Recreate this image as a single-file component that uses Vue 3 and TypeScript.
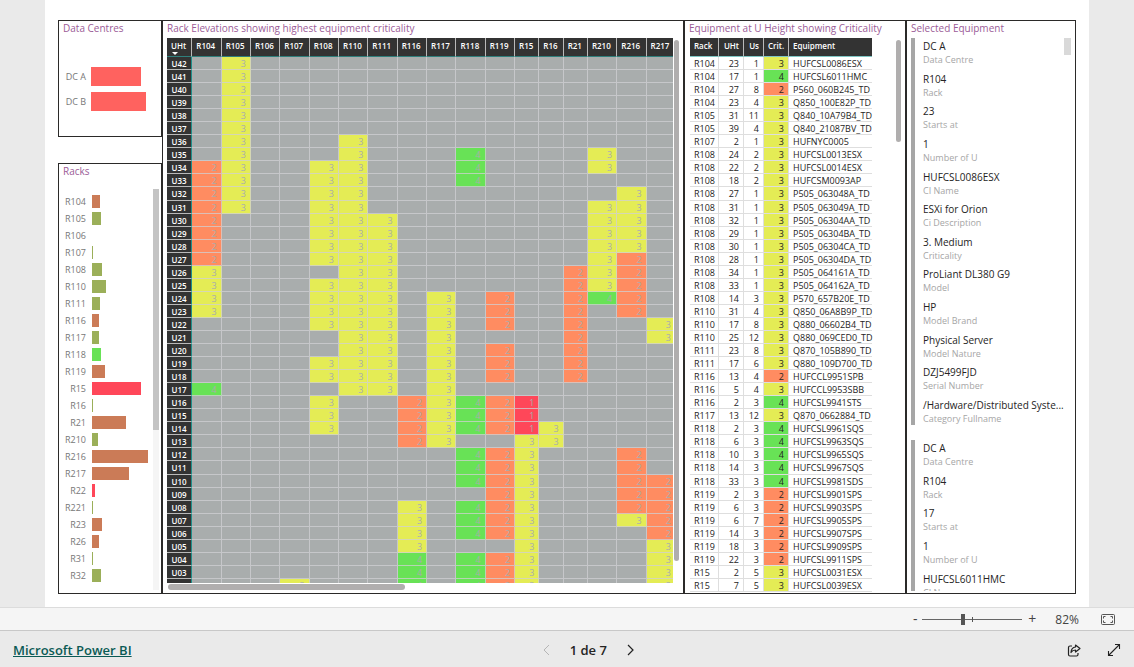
<script setup lang="ts">
import { ref } from 'vue'

interface Bar {
  name: string
  size: number
  tone: string
}

interface Run {
  from: number
  to: number
  crit: number
}

interface Rack {
  name: string
  runs: Run[]
}

const zoom = ref(40)

const centres: Bar[] = [
  { name: 'DC A', size: 49, tone: 'coral' },
  { name: 'DC B', size: 54, tone: 'coral' },
]

const rackBars: Bar[] = [
  { name: 'R104', size: 8, tone: 'clay' },
  { name: 'R105', size: 9, tone: 'olive' },
  { name: 'R106', size: 0, tone: 'olive' },
  { name: 'R107', size: 1, tone: 'olive' },
  { name: 'R108', size: 10, tone: 'olive' },
  { name: 'R110', size: 14, tone: 'olive' },
  { name: 'R111', size: 8, tone: 'olive' },
  { name: 'R116', size: 7, tone: 'clay' },
  { name: 'R117', size: 7, tone: 'olive' },
  { name: 'R118', size: 9, tone: 'green' },
  { name: 'R119', size: 13, tone: 'clay' },
  { name: 'R15', size: 49, tone: 'red' },
  { name: 'R16', size: 1, tone: 'olive' },
  { name: 'R21', size: 34, tone: 'clay' },
  { name: 'R210', size: 6, tone: 'olive' },
  { name: 'R216', size: 56, tone: 'clay' },
  { name: 'R217', size: 37, tone: 'clay' },
  { name: 'R22', size: 3, tone: 'red' },
  { name: 'R221', size: 1, tone: 'olive' },
  { name: 'R23', size: 10, tone: 'clay' },
  { name: 'R26', size: 7, tone: 'clay' },
  { name: 'R31', size: 1, tone: 'olive' },
  { name: 'R32', size: 9, tone: 'olive' },
]

const run = (from: number, to: number, crit: number): Run => ({ from, to, crit })

const racks: Rack[] = [
  { name: 'R104', runs: [run(34, 27, 2), run(26, 23, 3), run(17, 17, 4)] },
  { name: 'R105', runs: [run(42, 31, 3)] },
  { name: 'R106', runs: [] },
  { name: 'R107', runs: [run(2, 2, 3)] },
  { name: 'R108', runs: [run(34, 27, 3), run(25, 22, 3), run(19, 18, 3), run(16, 14, 3)] },
  { name: 'R110', runs: [run(36, 17, 3)] },
  { name: 'R111', runs: [run(30, 17, 3)] },
  { name: 'R116', runs: [run(16, 13, 2), run(8, 5, 3), run(4, 2, 4)] },
  { name: 'R117', runs: [run(24, 13, 3)] },
  { name: 'R118', runs: [run(35, 33, 4), run(16, 14, 4), run(12, 10, 4), run(8, 6, 4), run(4, 2, 4)] },
  { name: 'R119', runs: [run(24, 22, 2), run(20, 18, 2), run(16, 14, 2), run(12, 6, 2), run(4, 2, 2)] },
  { name: 'R15', runs: [run(16, 14, 1), run(13, 2, 3)] },
  { name: 'R16', runs: [run(14, 13, 3)] },
  { name: 'R21', runs: [run(26, 18, 2)] },
  { name: 'R210', runs: [run(35, 34, 3), run(31, 25, 3), run(24, 24, 4)] },
  { name: 'R216', runs: [run(32, 28, 3), run(27, 23, 2), run(12, 8, 2), run(7, 7, 3)] },
  { name: 'R217', runs: [run(22, 21, 3), run(10, 6, 2), run(5, 2, 3)] },
]

const units: number[] = Array.from({ length: 42 }, (_, i) => 42 - i)
const unitLabel = (u: number): string => 'U' + String(u).padStart(2, '0')
const critAt = (rack: Rack, u: number): number | undefined =>
  rack.runs.find((r) => u <= r.from && u >= r.to)?.crit

const equipment: [string, number, number, number, string][] = [
  ['R104', 23, 1, 3, 'HUFCSL0086ESX'],
  ['R104', 17, 1, 4, 'HUFCSL6011HMC'],
  ['R104', 27, 8, 2, 'P560_060B245_TD'],
  ['R104', 23, 4, 3, 'Q850_100E82P_TD'],
  ['R105', 31, 11, 3, 'Q840_10A79B4_TD'],
  ['R105', 39, 4, 3, 'Q840_21087BV_TD'],
  ['R107', 2, 1, 3, 'HUFNYC0005'],
  ['R108', 24, 2, 3, 'HUFCSL0013ESX'],
  ['R108', 22, 2, 3, 'HUFCSL0014ESX'],
  ['R108', 18, 2, 3, 'HUFCSM0093AP'],
  ['R108', 27, 1, 3, 'P505_063048A_TD'],
  ['R108', 31, 1, 3, 'P505_063049A_TD'],
  ['R108', 32, 1, 3, 'P505_06304AA_TD'],
  ['R108', 29, 1, 3, 'P505_06304BA_TD'],
  ['R108', 30, 1, 3, 'P505_06304CA_TD'],
  ['R108', 28, 1, 3, 'P505_06304DA_TD'],
  ['R108', 34, 1, 3, 'P505_064161A_TD'],
  ['R108', 33, 1, 3, 'P505_064162A_TD'],
  ['R108', 14, 3, 3, 'P570_657B20E_TD'],
  ['R110', 31, 4, 3, 'Q850_06A8B9P_TD'],
  ['R110', 17, 8, 3, 'Q880_06602B4_TD'],
  ['R110', 25, 12, 3, 'Q880_069CED0_TD'],
  ['R111', 23, 8, 3, 'Q870_105B890_TD'],
  ['R111', 17, 6, 3, 'Q880_109D700_TD'],
  ['R116', 13, 4, 2, 'HUFCCL9951SPB'],
  ['R116', 5, 4, 3, 'HUFCCL9953SBB'],
  ['R116', 2, 3, 4, 'HUFCSL9941STS'],
  ['R117', 13, 12, 3, 'Q870_0662884_TD'],
  ['R118', 2, 3, 4, 'HUFCSL9961SQS'],
  ['R118', 6, 3, 4, 'HUFCSL9963SQS'],
  ['R118', 10, 3, 4, 'HUFCSL9965SQS'],
  ['R118', 14, 3, 4, 'HUFCSL9967SQS'],
  ['R118', 33, 3, 4, 'HUFCSL9981SDS'],
  ['R119', 2, 3, 2, 'HUFCSL9901SPS'],
  ['R119', 6, 3, 2, 'HUFCSL9903SPS'],
  ['R119', 6, 7, 2, 'HUFCSL9905SPS'],
  ['R119', 14, 3, 2, 'HUFCSL9907SPS'],
  ['R119', 18, 3, 2, 'HUFCSL9909SPS'],
  ['R119', 22, 3, 2, 'HUFCSL9911SPS'],
  ['R15', 2, 5, 3, 'HUFCSL0031ESX'],
  ['R15', 7, 5, 3, 'HUFCSL0039ESX'],
]

const cards: [string, string][][] = [
  [
    ['DC A', 'Data Centre'],
    ['R104', 'Rack'],
    ['23', 'Starts at'],
    ['1', 'Number of U'],
    ['HUFCSL0086ESX', 'CI Name'],
    ['ESXi for Orion', 'Ci Description'],
    ['3. Medium', 'Criticality'],
    ['ProLiant DL380 G9', 'Model'],
    ['HP', 'Model Brand'],
    ['Physical Server', 'Model Nature'],
    ['DZJ5499FJD', 'Serial Number'],
    ['/Hardware/Distributed Syste...', 'Category Fullname'],
  ],
  [
    ['DC A', 'Data Centre'],
    ['R104', 'Rack'],
    ['17', 'Starts at'],
    ['1', 'Number of U'],
    ['HUFCSL6011HMC', 'CI Name'],
  ],
]
</script>

<template>
  <div class="viewer">
    <main class="stage">
      <div class="report">
        <div class="side">
          <section class="panel">
            <h2>Data Centres</h2>
            <ul class="bars centres">
              <li v-for="c in centres" :key="c.name">
                <span class="bar-label">{{ c.name }}</span>
                <span class="track"><span class="bar" :class="c.tone" :style="{ width: (c.size / 56) * 100 + '%' }"></span></span>
              </li>
            </ul>
          </section>
          <section class="panel racks">
            <h2>Racks</h2>
            <div class="rack-body">
              <ul class="bars">
                <li v-for="r in rackBars" :key="r.name">
                  <span class="bar-label">{{ r.name }}</span>
                  <span class="track"><span class="bar" :class="r.tone" :style="{ width: (r.size / 56) * 100 + '%' }"></span></span>
                </li>
              </ul>
              <div class="rack-scroll"><div class="rack-thumb"></div></div>
            </div>
          </section>
        </div>

        <section class="panel elevations">
          <h2>Rack Elevations showing highest equipment criticality</h2>
          <div class="scroll-row">
            <div class="viewport">
              <table class="matrix">
                <colgroup>
                  <col class="col-unit" />
                  <col v-for="r in racks" :key="r.name" :class="r.name.length > 3 ? 'col-wide' : 'col-narrow'" />
                </colgroup>
                <thead>
                  <tr>
                    <th scope="col" class="sorted">
                      UHt
                      <svg class="sort-mark" viewBox="0 0 6 3" width="6" height="3"><path d="M0 0h6L3 3z" fill="#fff" /></svg>
                    </th>
                    <th v-for="r in racks" :key="r.name" scope="col">{{ r.name }}</th>
                  </tr>
                </thead>
                <tbody>
                  <tr v-for="u in units" :key="u">
                    <th scope="row">{{ unitLabel(u) }}</th>
                    <td v-for="r in racks" :key="r.name" :class="'crit-' + (critAt(r, u) ?? 'none')">{{ critAt(r, u) }}</td>
                  </tr>
                </tbody>
              </table>
            </div>
            <div class="vbar"><div class="thumb matrix-thumb"></div></div>
          </div>
          <div class="hbar"><div class="thumb hthumb"></div></div>
        </section>

        <section class="panel equipment">
          <h2>Equipment at U Height showing Criticality</h2>
          <div class="scroll-row">
            <div class="viewport">
              <table class="listing">
                <colgroup>
                  <col class="col-rack" />
                  <col class="col-uht" />
                  <col class="col-us" />
                  <col class="col-crit" />
                  <col />
                </colgroup>
                <thead>
                  <tr>
                    <th scope="col">Rack</th>
                    <th scope="col" class="num">UHt</th>
                    <th scope="col" class="num">Us</th>
                    <th scope="col" class="num">Crit.</th>
                    <th scope="col">Equipment</th>
                  </tr>
                </thead>
                <tbody>
                  <tr v-for="(e, i) in equipment" :key="i">
                    <td>{{ e[0] }}</td>
                    <td class="num">{{ e[1] }}</td>
                    <td class="num">{{ e[2] }}</td>
                    <td class="num" :class="'crit-' + e[3]">{{ e[3] }}</td>
                    <td>{{ e[4] }}</td>
                  </tr>
                </tbody>
              </table>
            </div>
            <div class="vbar"><div class="thumb listing-thumb"></div></div>
          </div>
        </section>

        <section class="panel selected">
          <h2>Selected Equipment</h2>
          <div class="scroll-row">
            <div class="cards">
              <dl v-for="(card, i) in cards" :key="i" class="card">
                <div v-for="field in card" :key="field[1]" class="field">
                  <dt>{{ field[1] }}</dt>
                  <dd>{{ field[0] }}</dd>
                </div>
              </dl>
            </div>
            <div class="card-scroll"></div>
          </div>
        </section>
      </div>
    </main>

    <div class="zoombar">
      <button type="button" class="step" aria-label="Zoom out">-</button>
      <input v-model.number="zoom" class="slider" type="range" min="0" max="100" aria-label="Zoom" />
      <button type="button" class="step" aria-label="Zoom in">+</button>
      <span class="percent">82%</span>
      <button type="button" class="icon-btn" aria-label="Fit to page">
        <svg width="14" height="11" viewBox="0 0 14 11" fill="none" stroke="#555">
          <rect x="0.5" y="0.5" width="13" height="10" rx="1" />
          <path d="M4.5 2.5h-2v2M2.5 6.5v2h2M9.5 2.5h2v2M11.5 6.5v2h-2" />
        </svg>
      </button>
    </div>

    <footer class="footer">
      <a href="#" class="brand">Microsoft Power BI</a>
      <nav class="pager" aria-label="Pages">
        <button type="button" class="icon-btn" aria-label="Previous page" disabled>
          <svg width="10" height="12" viewBox="0 0 10 12" fill="none" stroke="#b5b5b5"><path d="M7 1L2 6l5 5" /></svg>
        </button>
        <span class="page">1 de 7</span>
        <button type="button" class="icon-btn" aria-label="Next page">
          <svg width="10" height="12" viewBox="0 0 10 12" fill="none" stroke="#222" stroke-width="1.2"><path d="M3 1l5 5-5 5" /></svg>
        </button>
      </nav>
      <div class="actions">
        <button type="button" class="icon-btn" aria-label="Share">
          <svg width="14" height="13" viewBox="0 0 14 13" fill="none" stroke="#222" stroke-width="1.2" stroke-linejoin="round">
            <path d="M5 2H3Q1.500 2 1.500 3.500V10.500Q1.500 12 3 12H9.500Q11 12 11 10.500V9" />
            <path d="M8.500 1L13 4.500L8.500 8V6Q5.500 6 4 8.500Q4.300 3.500 8.500 3Z" />
          </svg>
        </button>
        <button type="button" class="icon-btn" aria-label="Full screen">
          <svg width="14" height="14" viewBox="0 0 14 14" fill="none" stroke="#222" stroke-width="1.1">
            <path d="M1.500 12.500L12.500 1.500M8 1.500h4.500V6M1.500 8v4.500H6" />
          </svg>
        </button>
      </div>
    </footer>
  </div>
</template>

<style>
body {
  margin: 0;
}
</style>

<style scoped>
.viewer {
  display: flex;
  flex-direction: column;
  height: 100vh;
  overflow: hidden;
  background: #eaeaea;
  color: #252423;
  font-family: 'Open Sans', 'Noto Sans', sans-serif;
  font-size: 9px;
}

.viewer * {
  box-sizing: border-box;
}

button {
  padding: 0;
  border: 0;
  background: none;
  color: inherit;
  font: inherit;
}

.stage {
  display: flex;
  flex: 1;
  min-height: 0;
  padding: 0 45px;
}

.report {
  display: grid;
  flex: 1;
  grid-template-columns: 104fr 522fr 222fr 170fr;
  grid-template-rows: minmax(0, 1fr);
  padding: 20px 13px 13px;
  background: #fff;
}

.side {
  display: grid;
  grid-template-rows: 117px minmax(0, 1fr);
  gap: 26px;
  min-width: 0;
}

.panel {
  display: flex;
  flex-direction: column;
  min-width: 0;
  min-height: 0;
  border: 1px solid #2b2a29;
  overflow: hidden;
}

h2 {
  flex: none;
  margin: 0;
  padding: 0 0 2px 4px;
  color: #9b5c97;
  font-size: 10px;
  font-weight: 400;
  line-height: 15px;
  white-space: nowrap;
}

.bars {
  flex: 1;
  min-width: 0;
  margin: 0;
  padding: 0;
  list-style: none;
}

.bars li {
  display: flex;
  align-items: center;
  gap: 6px;
  height: 17px;
}

.centres {
  padding: 26px 13px 0 0;
}

.bars.centres li {
  gap: 5px;
  height: 25px;
}

.centres .bar {
  height: 19px;
}

.bar-label {
  flex: none;
  width: 27px;
  color: #777;
  text-align: right;
}

.track {
  flex: 1;
}

.bar {
  display: block;
  height: 13px;
}

.coral {
  background: #ff625f;
}

.clay {
  background: #cb7b57;
}

.olive {
  background: #9baf59;
}

.green {
  background: #68e256;
}

.red {
  background: #ff4759;
}

.rack-body {
  display: flex;
  flex: 1;
  gap: 5px;
  min-height: 0;
  padding: 8px 2px 3px 0;
}

.rack-body .bars {
  padding-top: 4px;
}

.rack-scroll {
  width: 6px;
  background: #f5f5f5;
}

.rack-thumb {
  height: 60%;
  background: #c4c4c4;
}

.scroll-row {
  display: flex;
  flex: 1;
  min-height: 0;
}

.viewport {
  flex: 1;
  min-width: 0;
  overflow: hidden;
}

.thumb {
  border-radius: 3px;
  background: #b0aeae;
}

.vbar {
  flex: none;
  width: 5px;
  padding-top: 2px;
}

.elevations {
  padding: 0 4px 3px;
}

.elevations h2,
.equipment h2,
.selected h2 {
  padding-left: 0;
}

.elevations .scroll-row {
  gap: 1px;
}

.matrix-thumb {
  height: 96%;
}

.hbar {
  flex: none;
  height: 7px;
  padding: 1px 6px 0 1px;
}

.hthumb {
  width: 47%;
  height: 6px;
}

table {
  border-spacing: 0;
  table-layout: fixed;
}

th,
td {
  padding: 1px 4px 0;
  overflow: hidden;
  font-size: 9px;
  line-height: 11px;
  white-space: nowrap;
}

th {
  background: #333;
  color: #fff;
  font-size: 8px;
  font-weight: 600;
}

thead th {
  height: 19px;
  padding-top: 2px;
  border-right: 1px solid #b9b9b9;
  border-bottom: 1px solid #2f7f7c;
  line-height: 12px;
  vertical-align: top;
}

.matrix {
  width: 509px;
  height: 567px;
}

.col-unit {
  width: 25px;
}

.col-wide {
  width: 29px;
}

.col-narrow {
  width: 24px;
}

.matrix td {
  border-right: 1px solid rgba(208, 208, 212, 0.75);
  border-bottom: 1px solid rgba(208, 208, 212, 0.75);
  background-color: #a9adad;
  color: #a9adad;
  text-align: right;
}

.matrix tbody th {
  padding: 1px 0 0;
  border-right: 1px solid #1f8f8a;
  border-bottom: 1px solid #b9b9b9;
  text-align: center;
}

.matrix thead th {
  padding-right: 0;
  text-align: left;
}

.sort-mark {
  display: block;
  margin-left: 1px;
}

.matrix .crit-1,
.listing .crit-1 {
  background-color: #ff4759;
}

.matrix .crit-2,
.listing .crit-2 {
  background-color: #ff8c61;
}

.matrix .crit-3,
.listing .crit-3 {
  background-color: #e4ec55;
}

.matrix .crit-4,
.listing .crit-4 {
  background-color: #68e256;
}

.equipment {
  padding: 0 4px 1px;
}

.equipment .viewport {
  padding-left: 1px;
}

.listing {
  width: 182px;
  height: 554px;
}

.listing thead th {
  border-bottom-color: #7fc6c4;
  text-align: left;
}

.listing td {
  border-right: 1px solid #dedede;
  border-bottom: 1px solid #dedede;
}

.listing th:last-child,
.listing td:last-child {
  padding-right: 0;
  border-right: 0;
  overflow: visible;
}

.listing thead .num,
.listing .num {
  text-align: right;
}

.col-rack {
  width: 29px;
}

.col-uht {
  width: 25px;
}

.col-us {
  width: 20px;
}

.col-crit {
  width: 25px;
}

.listing-thumb {
  height: 102px;
}

.selected {
  padding: 0 4px 2px;
}

.cards {
  flex: 1;
  min-width: 0;
  overflow: hidden;
}

.card {
  display: grid;
  grid-template-rows: repeat(12, 28px);
  align-content: space-between;
  height: 387px;
  margin: 0 0 15px;
  padding-left: 8px;
  border-left: 4px solid #a6a6a6;
}

.field {
  display: flex;
  flex-direction: column-reverse;
  justify-content: flex-end;
  white-space: nowrap;
}

dt {
  color: #a6a6a6;
  line-height: 12px;
}

dd {
  margin: 0;
  font-size: 10px;
  line-height: 16px;
}

.card-scroll {
  width: 7px;
  height: 17px;
  background: #d9d9d9;
}

.zoombar {
  display: flex;
  flex: none;
  align-items: center;
  justify-content: flex-end;
  height: 24px;
  padding-right: 19px;
  border-top: 1px solid #dcdcdc;
  border-bottom: 1px solid #c8c8c8;
  background: #f5f5f5;
  color: #444;
  font-size: 12px;
}

.step {
  width: 14px;
  font-size: 14px;
  line-height: 20px;
}

.slider {
  width: 100px;
  height: 12px;
  margin: 0 3px 0 0;
  appearance: none;
  background:
    linear-gradient(#555, #555) 50px center / 1px 5px no-repeat,
    linear-gradient(#666, #666) center / 100% 1px no-repeat;
}

.slider::-webkit-slider-thumb {
  width: 4px;
  height: 11px;
  appearance: none;
  background: #555;
}

.percent {
  margin: 0 22px 0 16px;
}

.icon-btn {
  display: flex;
  align-items: center;
}

.footer {
  display: flex;
  flex: none;
  align-items: center;
  justify-content: space-between;
  height: 36px;
  padding: 2px 13px 0;
}

.brand {
  color: #0b5a55;
  font-size: 13px;
  font-weight: 600;
}

.pager {
  display: flex;
  align-items: center;
  gap: 18px;
  font-size: 13px;
  font-weight: 600;
}

.actions {
  display: flex;
  align-items: center;
  gap: 26px;
  padding-left: 22px;
}
</style>
